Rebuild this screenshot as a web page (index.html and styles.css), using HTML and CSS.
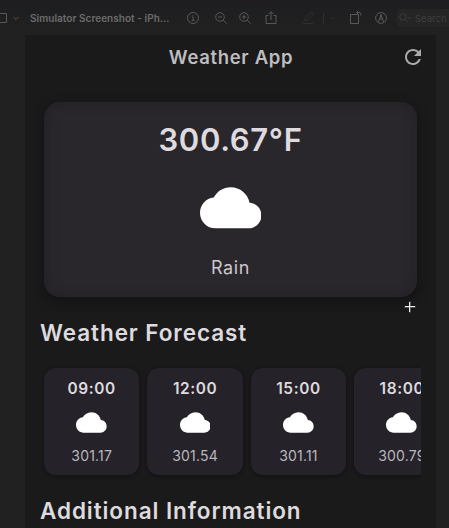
FILE: index.html
```html
<!DOCTYPE html>
<html lang="en">
<head>
<meta charset="utf-8">
<title>Weather App</title>
<link rel="stylesheet" href="styles.css">
</head>
<body>
<svg class="defs" aria-hidden="true">
  <symbol id="cloud" viewBox="0 0 24 24"><path d="M19.35 10.04C18.67 6.59 15.64 4 12 4 9.11 4 6.6 5.64 5.35 8.04 2.34 8.36 0 10.91 0 14c0 3.31 2.69 6 6 6h13c2.76 0 5-2.24 5-5 0-2.64-2.05-4.78-4.65-4.96z"/></symbol>
</svg>
<header class="toolbar">
  <svg class="tool sidebar" viewBox="0 0 20 16"><path d="M0 3.500h6.500v9H0M13.600 7l2.400 2.400L18.400 7"/></svg>
  <span class="file">Simulator Screenshot - iPh...</span>
  <svg class="tool info" viewBox="0 0 16 16"><circle cx="8" cy="8" r="5.500"/><path d="M6.800 7h1.400v3.500M6.600 10.500h3M8 5v.8"/></svg>
  <svg class="tool out" viewBox="0 0 16 16"><circle cx="7" cy="7" r="4.300"/><path d="M10.200 10.200l3.500 3.500M5 7h4"/></svg>
  <svg class="tool in" viewBox="0 0 16 16"><circle cx="7" cy="7" r="4.300"/><path d="M10.200 10.200l3.500 3.500M5 7h4M7 5v4"/></svg>
  <svg class="tool share" viewBox="0 0 16 16"><path d="M5.500 5.500H3v8h10v-8h-2.500M8 10V1.800M5.700 4L8 1.700 10.300 4"/></svg>
  <svg class="tool pen" viewBox="0 0 36 16"><path d="M3.500 11l1-3 6-6 2 2-6 6zM2 13.500h10M22.500 3v11M29 7l2.500 2L34 7"/></svg>
  <svg class="tool rotate" viewBox="0 0 16 16"><path d="M2.500 4.500h8v9h-8zM8.500 2.500h2.500q2 0 2 3M10.300.8L8.500 2.500l1.800 1.700"/></svg>
  <svg class="tool markup" viewBox="0 0 16 16"><circle cx="8" cy="8" r="5.400"/><path d="M5.500 12L8 4.500l2.500 7.500M6.700 9h2.600M8 5v3"/></svg>
  <div class="search">
    <svg class="tool" viewBox="0 0 16 16"><circle cx="6" cy="7" r="3.200"/><path d="M8.500 9.500l2.500 2.500M11 7l1.500 1.500L14 7"/></svg>
    <span>Search</span>
  </div>
</header>
<main class="app">
  <div class="appbar">
    <h1>Weather App</h1>
    <svg class="refresh" viewBox="0 0 24 24"><path d="M17.650 6.350C16.200 4.900 14.210 4 12 4c-4.420 0-7.990 3.580-7.990 8s3.570 8 7.990 8c3.730 0 6.840-2.550 7.730-6h-2.080c-.82 2.330-3.040 4-5.650 4-3.310 0-6-2.690-6-6s2.690-6 6-6c1.660 0 3.140.69 4.220 1.780L13 11h7V4l-2.350 2.350z"/></svg>
  </div>
  <section class="current">
    <div class="temp">300.67°F</div>
    <svg class="cloud-lg" viewBox="0 0 24 24"><use href="#cloud"/></svg>
    <div class="sky">Rain</div>
    <svg class="cursor" viewBox="0 0 12 12"><path class="edge" d="M6 .5v11M.5 6h11"/><path class="core" d="M5.500 1v10M1 5.500h10"/></svg>
  </section>
  <h2 class="forecast-title">Weather Forecast</h2>
  <div class="forecast">
    <article class="hour"><b>09:00</b><svg viewBox="0 0 24 24"><use href="#cloud"/></svg><span>301.17</span></article>
    <article class="hour"><b>12:00</b><svg viewBox="0 0 24 24"><use href="#cloud"/></svg><span>301.54</span></article>
    <article class="hour"><b>15:00</b><svg viewBox="0 0 24 24"><use href="#cloud"/></svg><span>301.11</span></article>
    <article class="hour"><b>18:00</b><svg viewBox="0 0 24 24"><use href="#cloud"/></svg><span>300.79</span></article>
  </div>
  <h2 class="info-title">Additional Information</h2>
</main>
</body>
</html>
```
FILE: styles.css
```css
* { box-sizing: border-box; }
body {
  margin: 0;
  width: 449px;
  height: 528px;
  overflow: hidden;
  background: #212121;
  color: #dedade;
  font-family: Inter, "Liberation Sans", sans-serif;
}
h1, h2 { margin: 0; font-weight: 600; white-space: nowrap; }
.defs { position: absolute; width: 0; height: 0; }
.toolbar {
  display: flex;
  align-items: center;
  height: 35px;
  background: linear-gradient(#1d1e20, #222121);
  border-top: 1px solid #241d1e;
  color: #6c6c6c;
}
.tool { flex: none; width: 16px; height: 16px; fill: none; stroke: #5e5e5e; stroke-width: 0.9; }
.sidebar { width: 20px; }
.file {
  width: 142px;
  margin: 0 13px 0 10px;
  font-size: 10px;
  font-weight: 600;
  letter-spacing: 0.04px;
  white-space: nowrap;
}
.out { margin-left: 12px; }
.in { margin-left: 8px; }
.share { margin-left: 10px; }
.pen { width: 36px; margin-left: 22px; stroke: #323232; }
.rotate { margin-left: 11px; }
.markup { margin-left: 9px; }
.search {
  display: flex;
  flex: 1;
  align-items: center;
  height: 18px;
  margin-left: 8px;
  border-radius: 4px 0 0 4px;
  background: #252525;
  color: #3e3e3e;
  font-size: 9.500px;
}
.search .tool { stroke: #3e3e3e; }
.search span { margin-left: 2px; }
.app {
  width: 411px;
  height: 493px;
  margin-left: 25px;
  padding: 0 15px 0 16px;
  background: #1a1a1b;
  overflow: hidden;
}
.appbar {
  display: grid;
  grid-template-columns: 1fr 24px;
  align-items: center;
  height: 44px;
  margin-right: -4px;
}
.appbar h1 { padding-left: 20px; text-align: center; font-size: 18.500px; letter-spacing: 0.66px; color: #bebdc0; }
.refresh { width: 24px; height: 24px; fill: #aaa9ad; }
.current {
  position: relative;
  display: flex;
  flex-direction: column;
  align-items: center;
  height: 195px;
  margin: 23px 4px 0 3px;
  padding-top: 18px;
  border-radius: 16px;
  background: #29262c;
  box-shadow: 0 4px 10px 2px #141415, inset 0 0 12px #222123;
}
.temp { height: 40px; line-height: 40px; font-size: 31px; font-weight: 600; letter-spacing: 0.65px; }
.cloud-lg { width: 61.500px; height: 61.500px; margin-top: 17px; fill: #fff; }
.sky { height: 24px; margin-top: 17px; line-height: 24px; font-size: 18px; letter-spacing: 0.65px; color: #cbc7cd; }
.cursor { position: absolute; right: 1px; bottom: -16px; width: 12px; height: 12px; fill: none; }
.edge { stroke: #555; stroke-width: 2; }
.core { stroke: #eee; stroke-width: 1; }
h2 { height: 30px; line-height: 30px; font-size: 22.500px; letter-spacing: 0.92px; }
.forecast-title { margin: 21px 0 0 -1px; }
.forecast {
  display: flex;
  gap: 8px;
  height: 134px;
  padding: 20px 0 0 3px;
  overflow: hidden;
}
.hour {
  display: flex;
  flex: none;
  flex-direction: column;
  align-items: center;
  width: 95.400px;
  height: 107px;
  padding-top: 11px;
  border-radius: 12px;
  background: #252329;
  box-shadow: 0 1px 3px 1px #141415;
}
.hour b { height: 20px; line-height: 20px; font-size: 15.400px; font-weight: 600; letter-spacing: 0.6px; }
.hour svg { width: 30.800px; height: 30.800px; margin-top: 8px; fill: #fff; }
.hour span { height: 20px; margin-top: 8px; line-height: 20px; font-size: 14px; letter-spacing: 0.2px; color: #b9b6bc; }
.info-title { margin: 14px 0 0 -1px; }
```
